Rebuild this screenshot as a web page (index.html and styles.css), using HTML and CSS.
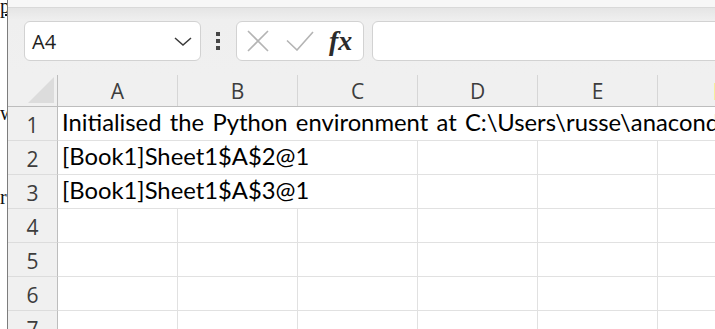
FILE: index.html
```html
<!DOCTYPE html>
<html lang="en">
<head>
    <meta charset="UTF-8">
    <meta name="viewport" content="width=device-width, initial-scale=1.0">
    <title>Book1 - Excel</title>
    <link rel="stylesheet" href="styles.css">
</head>
<body>
    <div class="screen">
        <!-- Document behind the Excel window -->
        <div class="backdrop">
            <div class="bk-line bk-link">p</div>
            <div class="bk-line bk-w">w</div>
            <div class="bk-line bk-r">r</div>
        </div>

        <div class="excel">
            <div class="ribbon-edge"></div>

            <!-- Formula bar -->
            <div class="formula-bar">
                <div class="name-box">
                    <span class="name-text">A4</span>
                    <svg class="chevron" width="18" height="9" viewBox="0 0 18 9">
                        <path d="M1 1L9 8L17 1" fill="none" stroke="#3a3a3a" stroke-width="1.5"/>
                    </svg>
                </div>
                <div class="grip"><span></span><span></span><span></span></div>
                <div class="fx-box">
                    <svg class="icon-cancel" width="22" height="22" viewBox="0 0 22 22">
                        <path d="M1 1L21 21M21 1L1 21" fill="none" stroke="#b4b4b4" stroke-width="1.6"/>
                    </svg>
                    <svg class="icon-enter" width="28" height="20" viewBox="0 0 28 20">
                        <path d="M1 9.5L11 19L27 1" fill="none" stroke="#b4b4b4" stroke-width="1.6"/>
                    </svg>
                    <span class="fx">fx</span>
                </div>
                <div class="formula-input"></div>
            </div>

            <!-- Worksheet -->
            <div class="sheet">
                <div class="row header-row">
                    <div class="corner"><span class="corner-tri"></span></div>
                    <div class="col-head">A</div>
                    <div class="col-head">B</div>
                    <div class="col-head">C</div>
                    <div class="col-head">D</div>
                    <div class="col-head">E</div>
                    <div class="col-head col-f"><span class="sliver"></span></div>
                </div>

                <div class="row">
                    <div class="row-head">1</div>
                    <div class="cell cell-wide">Initialised the Python environment at C:\Users\russe\anaconda3</div>
                </div>
                <div class="row">
                    <div class="row-head">2</div>
                    <div class="cell span-3">[Book1]Sheet1$A$2@1</div>
                    <div class="cell"></div>
                    <div class="cell"></div>
                    <div class="cell"></div>
                </div>
                <div class="row">
                    <div class="row-head">3</div>
                    <div class="cell span-3">[Book1]Sheet1$A$3@1</div>
                    <div class="cell"></div>
                    <div class="cell"></div>
                    <div class="cell"></div>
                </div>
                <div class="row">
                    <div class="row-head">4</div>
                    <div class="cell"></div><div class="cell"></div><div class="cell"></div>
                    <div class="cell"></div><div class="cell"></div><div class="cell"></div>
                </div>
                <div class="row">
                    <div class="row-head">5</div>
                    <div class="cell"></div><div class="cell"></div><div class="cell"></div>
                    <div class="cell"></div><div class="cell"></div><div class="cell"></div>
                </div>
                <div class="row">
                    <div class="row-head">6</div>
                    <div class="cell"></div><div class="cell"></div><div class="cell"></div>
                    <div class="cell"></div><div class="cell"></div><div class="cell"></div>
                </div>
                <div class="row">
                    <div class="row-head">7</div>
                    <div class="cell"></div><div class="cell"></div><div class="cell"></div>
                    <div class="cell"></div><div class="cell"></div><div class="cell"></div>
                </div>
            </div>
        </div>
    </div>
</body>
</html>
```

FILE: styles.css
```css
body {
    margin: 0;
    padding: 0;
    background: #fff;
    overflow: hidden;
}

.screen {
    display: flex;
    width: 715px;
    height: 329px;
    overflow: hidden;
}

/* Page behind the window */
.backdrop {
    flex: none;
    width: 7px;
    overflow: hidden;
    background: #fff;
    font-family: "Liberation Serif", serif;
    font-size: 20px;
    color: #111;
}

.bk-line {
    height: 18px;
    line-height: 16px;
    white-space: nowrap;
}

.bk-link {
    margin-top: -2px;
    text-decoration: underline;
}

.bk-w {
    margin-top: 89px;
}

.bk-r {
    margin-top: 66px;
}

/* Excel window */
.excel {
    flex: 1;
    min-width: 0;
    display: flex;
    flex-direction: column;
    border-left: 1px solid #7d7d7d;
    background: #f0f0f0;
    overflow: hidden;
    font-family: "Open Sans", "Noto Sans", sans-serif;
}

.ribbon-edge {
    flex: none;
    height: 7px;
    background: #f7f7f7;
    border-bottom: 1px solid #d9d9d9;
}

.formula-bar {
    flex: none;
    display: flex;
    align-items: center;
    height: 40px;
    padding: 13px 0 14px 16px;
    background: linear-gradient(#e5e5e5, #efefef 12px, #f0f0f0);
}

.name-box {
    flex: none;
    box-sizing: border-box;
    width: 177px;
    height: 40px;
    display: flex;
    align-items: center;
    justify-content: space-between;
    padding: 0 8px 0 7px;
    background: #fff;
    border: 1px solid #d2d2d2;
    border-radius: 6px;
}

.name-text {
    font-size: 20px;
    color: #1e1e1e;
}

.grip {
    flex: none;
    display: flex;
    flex-direction: column;
    gap: 3px;
    margin: 0 16px 0 15px;
}

.grip span {
    width: 4px;
    height: 4px;
    background: #474747;
}

.fx-box {
    flex: none;
    box-sizing: border-box;
    width: 128px;
    height: 40px;
    display: flex;
    align-items: center;
    padding-left: 10px;
    background: #fff;
    border: 1px solid #d2d2d2;
    border-radius: 6px;
}

.icon-enter {
    margin-left: 17px;
}

.fx {
    margin-left: 15px;
    font-family: "Liberation Serif", serif;
    font-style: italic;
    font-weight: bold;
    font-size: 28px;
    color: #2b2b2b;
    line-height: 1;
}

.formula-input {
    flex: none;
    box-sizing: border-box;
    width: 400px;
    height: 40px;
    margin-left: 8px;
    background: #fff;
    border: 1px solid #d2d2d2;
    border-radius: 6px;
}

/* Sheet grid */
.sheet {
    flex: none;
    display: flex;
    flex-direction: column;
}

.row {
    flex: none;
    display: flex;
    height: 34px;
}

.header-row {
    height: 32px;
    box-sizing: border-box;
    border-bottom: 1px solid #bdbdbd;
}

.corner {
    flex: none;
    box-sizing: border-box;
    width: 50px;
    border-right: 1px solid #bdbdbd;
    position: relative;
}

.corner-tri {
    position: absolute;
    right: 3px;
    bottom: 3px;
    width: 0;
    height: 0;
    border-style: solid;
    border-width: 0 0 26px 26px;
    border-color: transparent transparent #dcdcdc transparent;
}

.col-head {
    flex: none;
    box-sizing: border-box;
    width: 120px;
    display: flex;
    align-items: center;
    justify-content: center;
    border-right: 1px solid #d6d6d6;
    font-size: 21px;
    color: #3d3d3d;
}

.col-f {
    justify-content: flex-start;
    border-right: none;
}

.sliver {
    width: 3px;
    height: 17px;
    margin-left: 56px;
    margin-top: 2px;
    background: #f4ef9c;
}

.row-head {
    flex: none;
    box-sizing: border-box;
    width: 50px;
    display: flex;
    align-items: center;
    justify-content: center;
    padding-top: 3px;
    border-right: 1px solid #bdbdbd;
    border-bottom: 1px solid #dcdcdc;
    font-size: 21px;
    color: #3d3d3d;
}

.cell {
    flex: none;
    box-sizing: border-box;
    width: 120px;
    display: flex;
    align-items: flex-end;
    padding: 0 0 5px 4px;
    background: #fff;
    border-right: 1px solid #e1e1e1;
    border-bottom: 1px solid #e1e1e1;
    font-family: Lato, "Liberation Sans", sans-serif;
    font-size: 23.8px;
    word-spacing: 2.2px;
    line-height: 1;
    color: #000;
    white-space: nowrap;
    overflow: hidden;
}

.cell-wide {
    flex: 1;
    border-right: none;
}

.span-3 {
    width: 360px;
}
```
